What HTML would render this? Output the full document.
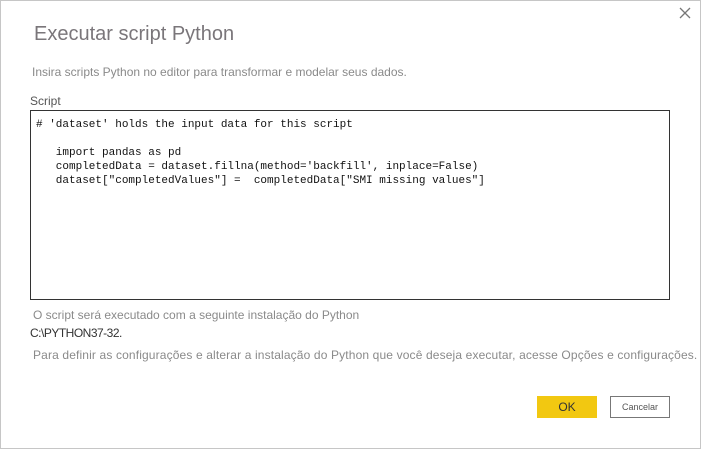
<!DOCTYPE html>
<html><head><meta charset="utf-8"><style>
*{margin:0;padding:0;box-sizing:border-box}
body{width:701px;height:449px;background:#fff;position:relative;overflow:hidden;font-family:"Liberation Sans",sans-serif}
.frame{position:absolute;left:0;top:0;width:701px;height:449px;border:1px solid #c6c6c6}
.t{position:absolute;white-space:nowrap}
</style></head><body>
<div class="frame"></div>
<svg style="position:absolute;left:679px;top:7px" width="12" height="12"><path d="M1 1L11 11M11 1L1 11" stroke="#777" stroke-width="1.3"/></svg>
<div class="t" style="left:34px;top:23px;font-size:20px;color:#7a767a">Executar script Python</div>
<div class="t" style="left:32px;top:65px;font-size:12px;color:#8a8a8a">Insira scripts Python no editor para transformar e modelar seus dados.</div>
<div class="t" style="left:30px;top:94px;font-size:12px;color:#555">Script</div>
<div style="position:absolute;left:30px;top:110px;width:640px;height:190px;border:1px solid #333"></div>
<pre style="position:absolute;white-space:pre;left:36px;top:118px;font-family:'Liberation Mono',monospace;font-size:11px;line-height:14px;color:#111">
# 'dataset' holds the input data for this script

   import pandas as pd
   completedData = dataset.fillna(method='backfill', inplace=False)
   dataset["completedValues"] =  completedData["SMI missing values"]</pre>
<div class="t" style="left:33px;top:308px;font-size:12px;color:#8a8a8a">O script será executado com a seguinte instalação do Python</div>
<div class="t" style="left:30px;top:326px;font-size:12px;color:#333;letter-spacing:-0.5px">C:\PYTHON37-32.</div>
<div class="t" style="left:33px;top:348px;font-size:12px;color:#8a8a8a;letter-spacing:0.14px">Para definir as configurações e alterar a instalação do Python que você deseja executar, acesse Opções e configurações.</div>
<div style="position:absolute;left:537px;top:396px;width:60px;height:22px;background:#f2c811;font-size:12px;color:#333;text-align:center;line-height:22px">OK</div>
<div style="position:absolute;left:610px;top:396px;width:60px;height:22px;border:1px solid #777;font-size:9px;color:#555;text-align:center;line-height:20px">Cancelar</div>
</body></html>
